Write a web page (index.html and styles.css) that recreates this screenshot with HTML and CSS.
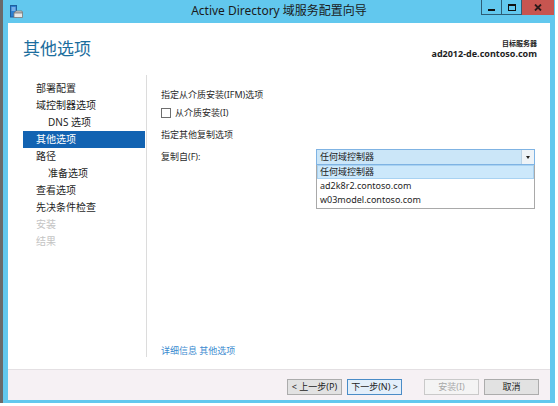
FILE: index.html
```html
<!DOCTYPE html>
<html lang="zh-CN">
<head>
<meta charset="utf-8">
<title>Active Directory 域服务配置向导</title>
<link rel="stylesheet" href="styles.css">
</head>
<body>
<div class="window">
  <div class="titlebar">
    <div class="tb-left">
      <svg class="app-icon" width="13" height="13" viewBox="0 0 13 13">
        <rect x="0.5" y="0.5" width="6" height="11.5" fill="#2b7fd0" stroke="#1d5f9e" stroke-width="1"/>
        <rect x="1.5" y="2.5" width="4" height="1" fill="#bfe0ff"/>
        <rect x="1.5" y="4.5" width="4" height="1" fill="#bfe0ff"/>
        <path d="M4 8 L6 6 L12 6 L12.5 8 Z" fill="#d8d8d8" stroke="#7a7a7a" stroke-width="0.8"/>
        <rect x="4" y="8" width="8.5" height="4.5" fill="#e8e8e8" stroke="#7a7a7a" stroke-width="0.8"/>
      </svg>
    </div>
    <div class="title">Active Directory 域服务配置向导</div>
    <div class="tb-right">
      <div class="controls">
        <div class="ctl min"><span class="min-glyph"></span></div>
        <div class="ctl max"><span class="max-glyph"></span></div>
        <div class="ctl close">
          <svg width="8" height="7" viewBox="0 0 8 7"><path d="M1 0.5 L7 6.5 M7 0.5 L1 6.5" stroke="#2a1a1a" stroke-width="1.8"/></svg>
        </div>
      </div>
    </div>
  </div>
  <div class="client">
    <div class="header">
      <h1 class="page-title">其他选项</h1>
      <div class="target">
        <div class="target-label">目标服务器</div>
        <div class="target-name">ad2012-de.contoso.com</div>
      </div>
    </div>
    <div class="content">
      <ul class="nav">
        <li class="nav-item">部署配置</li>
        <li class="nav-item">域控制器选项</li>
        <li class="nav-item sub">DNS 选项</li>
        <li class="nav-item active">其他选项</li>
        <li class="nav-item">路径</li>
        <li class="nav-item sub">准备选项</li>
        <li class="nav-item">查看选项</li>
        <li class="nav-item">先决条件检查</li>
        <li class="nav-item disabled">安装</li>
        <li class="nav-item disabled">结果</li>
      </ul>
      <div class="main">
        <div class="line">指定从介质安装(IFM)选项</div>
        <label class="check-row"><span class="checkbox"></span>从介质安装(I)</label>
        <div class="line section">指定其他复制选项</div>
        <div class="field-row">
          <div class="field-label">复制自(F):</div>
          <div class="combo">
            <div class="combo-box">
              <span class="combo-value">任何域控制器</span>
              <span class="combo-arrow"><span class="tri"></span></span>
            </div>
            <ul class="combo-list">
              <li class="combo-opt selected">任何域控制器</li>
              <li class="combo-opt">ad2k8r2.contoso.com</li>
              <li class="combo-opt">w03model.contoso.com</li>
            </ul>
          </div>
        </div>
        <a class="more-link">详细信息 其他选项</a>
      </div>
    </div>
    <div class="footer">
      <button class="btn">&lt; 上一步(P)</button>
      <button class="btn default">下一步(N) &gt;</button>
      <button class="btn disabled gap-left">安装(I)</button>
      <button class="btn">取消</button>
    </div>
  </div>
</div>
</body>
</html>
```
FILE: styles.css
```css
html, body {
  margin: 0;
  padding: 0;
  background: #ffffff;
}
body {
  font-family: "Noto Sans", "Noto Sans CJK SC", sans-serif;
  color: #1e1e1e;
}
ul { list-style: none; margin: 0; padding: 0; }

.window {
  width: 555px;
  height: 403px;
  box-sizing: border-box;
  background: #62c8ee;
  border-left: 3px solid #6a6a6a;
  padding: 0 5px 3px 5px;
  display: flex;
  flex-direction: column;
}

/* title bar */
.titlebar {
  height: 23px;
  margin: 0 -5px;
  display: grid;
  grid-template-columns: 1fr auto 1fr;
  align-items: start;
  flex: none;
}
.tb-left {
  padding: 5px 0 0 7px;
}
.app-icon { display: block; }
.title {
  font-size: 12px;
  line-height: 23px;
  color: #1b1b1b;
  white-space: nowrap;
  margin-top: -1px;
}
.tb-right {
  display: flex;
  justify-content: flex-end;
  padding-right: 1px;
}
.controls {
  display: flex;
  height: 15px;
}
.ctl {
  box-sizing: border-box;
  height: 15px;
  display: flex;
  align-items: center;
  justify-content: center;
  border: 1px solid #2d5d76;
  border-top: none;
}
.ctl.min { width: 21px; }
.ctl.max { width: 20px; border-left: none; }
.ctl.close {
  width: 32px;
  border: none;
  background: #c75550;
}
.min-glyph {
  width: 7px;
  height: 2px;
  background: #111;
  margin-top: 5px;
}
.max-glyph {
  box-sizing: border-box;
  width: 8px;
  height: 7px;
  border: 1px solid #111;
  border-top-width: 2px;
}

/* client */
.client {
  flex: 1;
  background: #ffffff;
  display: flex;
  flex-direction: column;
  min-height: 0;
}
.header {
  height: 52px;
  flex: none;
  display: flex;
  align-items: center;
  justify-content: space-between;
  padding: 0 13px 0 15px;
}
.page-title {
  margin: 0;
  font-size: 17px;
  font-weight: normal;
  line-height: 20px;
  color: #1c6e9e;
}
.target {
  text-align: right;
  color: #1e1e1e;
  font-weight: bold;
}
.target-label { font-size: 7px; line-height: 9px; }
.target-name { font-size: 9px; line-height: 12px; }

.content {
  flex: 1;
  display: flex;
  padding: 0 0 12px 15px;
  min-height: 0;
}
.nav {
  width: 122px;
  padding-top: 5px;
  flex: none;
}
.nav-item {
  height: 17px;
  line-height: 17px;
  font-size: 10px;
  padding-left: 13px;
  white-space: nowrap;
  color: #1e1e1e;
}
.nav-item.sub { padding-left: 25px; }
.nav-item.active {
  background: #1263b2;
  color: #ffffff;
}
.nav-item.disabled { color: #c4c4c4; }

.main {
  flex: 1;
  margin-left: 1px;
  border-left: 1px solid #dcdcdc;
  padding: 13px 15px 0 14px;
  display: flex;
  flex-direction: column;
  font-size: 9px;
  color: #2a2a2a;
}
.line {
  line-height: 14px;
}
.line.section { margin-top: 8px; }
.check-row {
  margin-top: 4px;
  display: flex;
  align-items: center;
  height: 14px;
  line-height: 14px;
}
.checkbox {
  box-sizing: border-box;
  width: 10px;
  height: 10px;
  border: 1px solid #6e6e6e;
  background: #fff;
  margin-right: 4px;
}
.field-row {
  margin-top: 7px;
  display: flex;
  align-items: center;
}
.field-label {
  width: 155px;
  line-height: 16px;
}
.combo {
  position: relative;
  width: 219px;
}
.combo-box {
  box-sizing: border-box;
  height: 16px;
  border: 1px solid #7fb3e3;
  background: #cbe6f8;
  display: flex;
  align-items: stretch;
}
.combo-value {
  flex: 1;
  padding-left: 3px;
  line-height: 14px;
  color: #1e1e1e;
}
.combo-arrow {
  width: 12px;
  background: #eef3f7;
  border-left: 1px solid #b9d2e6;
  display: flex;
  align-items: center;
  justify-content: center;
}
.tri {
  width: 0;
  height: 0;
  border-left: 2.5px solid transparent;
  border-right: 2.5px solid transparent;
  border-top: 3px solid #222;
}
.combo-list {
  position: absolute;
  top: 16px;
  left: 0;
  width: 219px;
  box-sizing: border-box;
  border: 1px solid #a9a9a9;
  border-top: none;
  background: #fff;
  padding: 0 0 1px 0;
}
.combo-opt {
  height: 14px;
  line-height: 14px;
  padding-left: 3px;
  color: #1e1e1e;
  box-sizing: border-box;
  white-space: nowrap;
}
.combo-opt.selected {
  background: #cce8fb;
  border: 1px solid #a8d2f2;
  line-height: 12px;
  padding-left: 2px;
}
.more-link {
  margin-top: auto;
  line-height: 12px;
  color: #3b8ad0;
  font-size: 9px;
  cursor: pointer;
}

.footer {
  height: 31px;
  box-sizing: border-box;
  flex: none;
  background: #f6f1f4;
  border-top: 1px solid #e4e0e3;
  display: flex;
  justify-content: flex-end;
  align-items: flex-start;
  padding: 9px 11px 0 0;
  gap: 5px;
}
.btn {
  box-sizing: border-box;
  width: 55px;
  height: 16px;
  padding: 0;
  font-family: inherit;
  font-size: 9px;
  line-height: 14px;
  color: #1e1e1e;
  background: #e2e2e2;
  border: 1px solid #acacac;
  border-radius: 0;
}
.btn.default {
  background: #e3effa;
  border-color: #4a8cc7;
}
.btn.disabled {
  background: #f4f4f4;
  border-color: #c9c9c9;
  color: #a8a8a8;
}
.btn.gap-left { margin-left: 17px; }
```
